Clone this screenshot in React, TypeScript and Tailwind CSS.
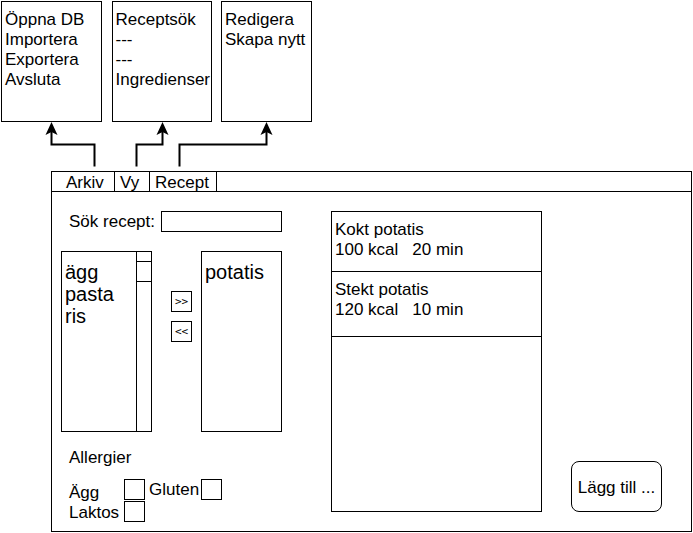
type MenuItem = { label: string; divider?: boolean };

const menus: { name: string; boxClass: string; items: MenuItem[] }[] = [
  {
    name: "Arkiv",
    boxClass: "w-[101px]",
    items: [{ label: "Öppna DB" }, { label: "Importera" }, { label: "Exportera" }, { label: "Avsluta" }],
  },
  {
    name: "Vy",
    boxClass: "w-[100px]",
    items: [
      { label: "Receptsök" },
      { label: "---", divider: true },
      { label: "---", divider: true },
      { label: "Ingredienser" },
    ],
  },
  {
    name: "Recept",
    boxClass: "w-[91px]",
    items: [{ label: "Redigera" }, { label: "Skapa nytt" }],
  },
];

const recipes = [
  { name: "Kokt potatis", energy: "100 kcal", time: "20 min", rowClass: "h-[60px]" },
  { name: "Stekt potatis", energy: "120 kcal", time: "10 min", rowClass: "h-[65px]" },
];

function MenuPanels() {
  return (
    <div className="flex w-[311px] max-w-full justify-between">
      {menus.map((menu) => (
        <ul
          key={menu.name}
          aria-label={menu.name}
          className={`h-[121px] shrink-0 border border-black px-[3px] pt-2 ${menu.boxClass}`}
        >
          {menu.items.map((item, i) => (
            <li key={i} className="whitespace-nowrap">
              {item.divider ? item.label : <button type="button">{item.label}</button>}
            </li>
          ))}
        </ul>
      ))}
    </div>
  );
}

function ArrowHead({ x }: { x: number }) {
  return <path d={`M${x} 0 l6 13 l-6 -3 l-6 3 z`} fill="black" />;
}

function MenuArrows() {
  return (
    <svg width="320" height="49" viewBox="0 0 320 49" aria-hidden="true">
      <g fill="none" stroke="black" strokeWidth="2">
        <path d="M93.5 44.5 V22.5 H50.5 V8" />
        <path d="M135.5 44.5 V22.5 H161.5 V8" />
        <path d="M178.5 44.5 V22.5 H265.5 V8" />
      </g>
      <ArrowHead x={50.5} />
      <ArrowHead x={161.5} />
      <ArrowHead x={265.5} />
    </svg>
  );
}

function MenuBar() {
  return (
    <nav className="flex h-5 border-b border-black leading-[21px]">
      <button type="button" className="w-[63px] border-r border-black pl-[14px] text-left">
        Arkiv
      </button>
      <button type="button" className="w-[35px] border-r border-black pl-[5px] text-left">
        Vy
      </button>
      <button type="button" className="w-[67px] border-r border-black pl-[5px] text-left">
        Recept
      </button>
    </nav>
  );
}

const moveButton =
  "size-[21px] border border-black font-['DejaVu_Sans_Mono',monospace] text-[11px] leading-[20px]";

function IngredientPicker() {
  return (
    <div className="flex h-[181px]">
      <div className="flex w-[91px] border border-black">
        <ul aria-label="Ingredienser" className="flex-1 pl-[3px] pt-[9px] text-[20px] leading-[22px]">
          <li>ägg</li>
          <li>pasta</li>
          <li>ris</li>
        </ul>
        <div className="w-[15px] border-l border-black pt-[9px]">
          <div className="h-[21px] border-y border-black" />
        </div>
      </div>
      <div className="flex flex-1 flex-col gap-[9px] pl-[19px] pt-10">
        <button type="button" aria-label="Lägg till ingrediens" className={moveButton}>
          &gt;&gt;
        </button>
        <button type="button" aria-label="Ta bort ingrediens" className={moveButton}>
          &lt;&lt;
        </button>
      </div>
      <ul aria-label="Valda ingredienser" className="w-[81px] border border-black pl-[3px] pt-[9px] text-[20px] leading-[22px]">
        <li>potatis</li>
      </ul>
    </div>
  );
}

const checkbox = "block size-[21px] appearance-none border border-black bg-white checked:bg-black";

function Allergies() {
  return (
    <fieldset className="pl-2 pt-4">
      <legend className="contents">Allergier</legend>
      <div className="mt-[11px] flex">
        <div className="flex w-[55px] flex-col pt-1">
          <label htmlFor="agg">Ägg</label>
          <label htmlFor="laktos">Laktos</label>
        </div>
        <div className="flex flex-col gap-px">
          <input id="agg" type="checkbox" className={checkbox} />
          <input id="laktos" type="checkbox" className={checkbox} />
        </div>
        <div className="ml-1 flex h-[21px] items-center gap-[2px] leading-[23px]">
          <label htmlFor="gluten">Gluten</label>
          <input id="gluten" type="checkbox" className={checkbox} />
        </div>
      </div>
    </fieldset>
  );
}

export default function App() {
  return (
    <div className="bg-white p-px font-['Liberation_Sans',Arial,sans-serif] text-[17px] leading-[20px] text-black">
      <MenuPanels />
      <MenuArrows />
      <main className="ml-[50px] border border-black">
        <MenuBar />
        <div className="flex pb-2 pl-[9px] pr-[29px] pt-[19px]">
          <section className="w-[221px] shrink-0">
            <div className="flex h-[21px] items-center justify-between pl-2 leading-[23px]">
              <label htmlFor="search">Sök recept:</label>
              <input id="search" type="text" className="h-[21px] w-[121px] border border-black px-1 outline-none" />
            </div>
            <div className="mt-[19px]">
              <IngredientPicker />
            </div>
            <Allergies />
          </section>
          <ul aria-label="Recept" className="mb-[11px] ml-[49px] flex-1 border border-black">
            {recipes.map((recipe) => (
              <li key={recipe.name} className={`border-b border-black pl-[3px] pt-2 ${recipe.rowClass}`}>
                <p>{recipe.name}</p>
                <p className="flex gap-[14px]">
                  <span>{recipe.energy}</span>
                  <span>{recipe.time}</span>
                </p>
              </li>
            ))}
          </ul>
          <button
            type="button"
            className="mb-[11px] ml-[29px] h-[51px] w-[91px] shrink-0 self-end whitespace-nowrap rounded-lg border border-black pt-[2px]"
          >
            Lägg till ...
          </button>
        </div>
      </main>
    </div>
  );
}
